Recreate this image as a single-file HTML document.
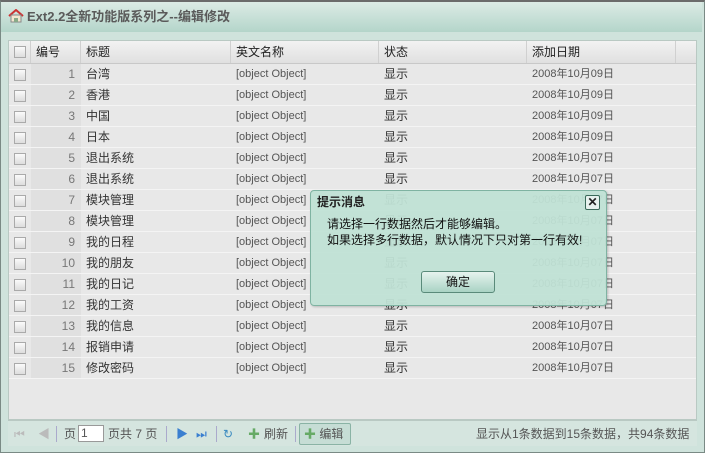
<!DOCTYPE html>
<html><head><meta charset="utf-8"><style>
*{margin:0;padding:0;box-sizing:border-box}
body{width:705px;height:453px;background:#fff;font-family:"Liberation Sans","Noto Sans CJK SC",sans-serif;font-size:12px;color:#222;position:relative;overflow:hidden}
.frame{position:absolute;left:0;top:0;width:705px;height:453px;border:1px solid #7a8a85;border-top:2px solid #6b6b6b;background:#cfe3dc}
.title{position:absolute;left:1px;top:2px;width:701px;height:30px;background:linear-gradient(#dcebe5,#b4d5ca);font-weight:bold;color:#5a5a5a;font-size:13px;line-height:30px;padding-left:26px}
.home{position:absolute;left:7px;top:7px;width:16px;height:14px}
.gridwrap{position:absolute;left:8px;top:40px;width:689px;height:380px;background:#e8e8e8;border:1px solid #b9c9c3}
.hdr{position:absolute;left:0;top:0;height:23px;width:687px;background:linear-gradient(#f2f2f2,#e0e0e0);border-bottom:1px solid #c8c8c8}
.c{position:absolute;height:100%;border-right:1px solid #d0d0d0;padding-left:5px;line-height:22px;white-space:nowrap;overflow:hidden}
.row{position:absolute;left:0;height:21px;width:687px;border-bottom:1px solid #f4f4f4;color:#333}
.row .c{line-height:20px;border-right:none}
.cb{position:absolute;left:5px;top:5px;width:12px;height:12px;border:1px solid #aaa;background:linear-gradient(#fafafa,#ddd)}
.num{background:#e0e0e0;text-align:right;padding-right:6px;color:#777}
.en{font-size:11px;color:#555}
.tb{position:absolute;left:8px;top:420px;width:689px;height:26px;background:#d5e5df;border-top:1px solid #b9c9c3;color:#555;line-height:26px}
.tb span{position:absolute;top:0}
.sep{position:absolute;top:5px;width:1px;height:16px;background:#aac}
.dlg{position:absolute;left:310px;top:190px;width:297px;height:116px;border:1px solid #7fb3a2;border-radius:4px;background:rgba(192,225,213,0.95);box-shadow:1px 1px 2px rgba(0,0,0,.2)}
.dlg .t{position:absolute;left:6px;top:2px;font-weight:bold;font-size:12px;color:#222}
.dlg .x{position:absolute;left:274px;top:4px;width:15px;height:15px;border:1px solid #3a6a5a;border-radius:2px;background:#e7f2ee;font-size:12px;line-height:12px;text-align:center;font-weight:bold}
.dlg .m{position:absolute;left:16px;top:25px;font-size:12px;line-height:16px;color:#111}
.btn{position:absolute;left:110px;top:80px;width:74px;height:22px;border:1px solid #5a8a7a;border-radius:3px;background:linear-gradient(#e6f3ee,#a9d3c4);text-align:center;line-height:20px;color:#111}
</style></head><body>
<div class="frame"></div>
<div class="title"><svg class="home" viewBox="0 0 16 14"><path d="M1 7L8 1L15 7" fill="none" stroke="#c33" stroke-width="2"/><rect x="3" y="6" width="10" height="7" fill="#f3e7d0" stroke="#888"/><rect x="6" y="9" width="4" height="4" fill="#8a8"/></svg>Ext2.2全新功能版系列之--编辑修改</div>
<div class="gridwrap">
<div class="hdr">
<div class="c" style="left:0;width:22px"><div class="cb"></div></div>
<div class="c" style="left:22px;width:50px">编号</div>
<div class="c" style="left:72px;width:150px">标题</div>
<div class="c" style="left:222px;width:148px">英文名称</div>
<div class="c" style="left:370px;width:148px">状态</div>
<div class="c" style="left:518px;width:149px">添加日期</div>
</div>
<div id="rows"></div>
</div>
<div class="tb">
<span style="left:6px;color:#bbb">⏮</span><span style="left:30px;color:#bbb">◀</span>
<div class="sep" style="left:48px"></div>
<span style="left:56px">页</span><span style="left:70px;top:4px;width:26px;height:17px;background:#fff;border:1px solid #999;line-height:15px;padding-left:2px">1</span>
<span style="left:100px">页共 7 页</span>
<div class="sep" style="left:158px"></div>
<span style="left:168px;color:#3a7fd0">▶</span><span style="left:188px;color:#3a7fd0">⏭</span>
<div class="sep" style="left:208px"></div>
<span style="left:215px;color:#3a8ac0">↻</span>
<span style="left:240px;color:#6a6">✚</span><span style="left:256px">刷新</span>
<div class="sep" style="left:287px"></div>
<span style="left:291px;top:2px;width:52px;height:22px;border:1px solid #8ab3a5;border-radius:2px;background:#c6ddd5;line-height:20px;padding-left:4px"><b style="color:#6a6">✚</b> 编辑</span>
<span style="left:468px">显示从1条数据到15条数据，共94条数据</span>
</div>
<div class="dlg">
<div class="t">提示消息</div>
<div class="x">✕</div>
<div class="m">请选择一行数据然后才能够编辑。<br>如果选择多行数据，默认情况下只对第一行有效!</div>
<div class="btn">确定</div>
</div>
<script>
var t=["台湾","香港","中国","日本","退出系统","退出系统","模块管理","模块管理","我的日程","我的朋友","我的日记","我的工资","我的信息","报销申请","修改密码"];
var h="";
for(var i=0;i<15;i++){var d=i<4?"09":"07";
h+='<div class="row" style="top:'+(23+i*21)+'px"><div class="c" style="left:0;width:22px"><div class="cb"></div></div><div class="c num" style="left:22px;width:50px">'+(i+1)+'</div><div class="c" style="left:72px;width:150px">'+t[i]+'</div><div class="c en" style="left:222px;width:148px">[object Object]</div><div class="c" style="left:370px;width:148px">显示</div><div class="c en" style="left:518px;width:149px">2008年10月'+d+'日</div></div>';}
document.getElementById("rows").innerHTML=h;
</script>
</body></html>
